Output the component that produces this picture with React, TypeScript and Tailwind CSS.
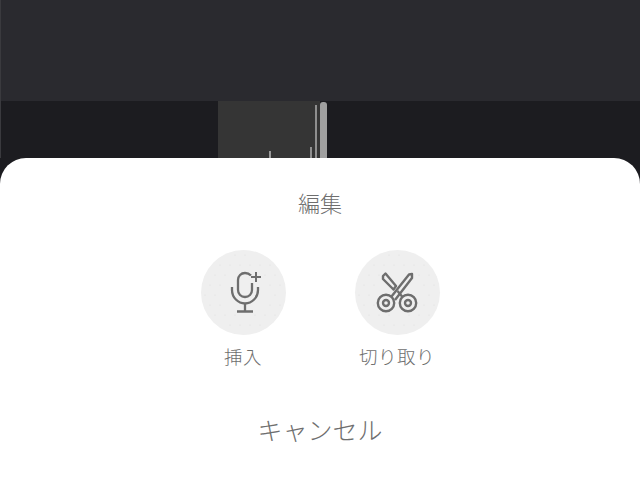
import React from "react";

const font = { fontFamily: '"Noto Sans CJK JP", "Noto Sans", sans-serif' };

function Dots() {
  const dots: React.ReactElement[] = [];
  for (let y = 5; y < 85; y += 10) {
    for (let x = 4 + ((y - 5) % 20 ? 5 : 0); x < 85; x += 10) {
      const dx = x - 42.5;
      const dy = y - 42.5;
      const r = Math.sqrt(dx * dx + dy * dy);
      if (r < 39 && r > 24) dots.push(<circle key={`${x}-${y}`} cx={x} cy={y} r={0.5} fill="#dcdcdc" stroke="none" />);
    }
  }
  return <>{dots}</>;
}

function Mic() {
  return (
    <svg width="85" height="85" viewBox="0 0 85 85" fill="none" stroke="#6e6e6e" strokeWidth="2.3">
      <Dots />
      <path d="M50 25.5 C48.5 24 46.5 23 44 23 C40 23 37 26 37 30 V40 C37 44 40 47 44 47 C48 47 51 44 51 40 V33" />
      <path d="M31 37 V40 C31 47.5 37 53.5 44 53.5 C51 53.5 57 47.5 57 40 V37" />
      <path d="M44 53.5 V61" />
      <path d="M36 61.5 H52" strokeWidth="2.4" />
      <path d="M55 22 V32 M50 27 H60" strokeWidth="2" />
    </svg>
  );
}

function Scissors() {
  return (
    <svg width="85" height="85" viewBox="0 0 85 85" fill="none" stroke="#6e6e6e" strokeWidth="2.4" strokeLinejoin="round">
      <Dots />
      <circle cx="31" cy="53" r="8.2" />
      <circle cx="31" cy="53" r="3" />
      <circle cx="53" cy="53" r="8.2" />
      <circle cx="53" cy="53" r="3" />
      <path d="M36.5 46.5 L54 24.5 L57 24 V28 L40 50" />
      <path d="M28 26 L30.5 23.5 L41 36 L38.5 39.5 L28 29 Z" />
      <path d="M42.5 41 L47.5 47" />
    </svg>
  );
}

function Action({ label, children }: { label: string; children: React.ReactNode }) {
  return (
    <div className="flex w-[85px] flex-col items-center">
      <div className="h-[85px] w-[85px] overflow-hidden rounded-full bg-[#efefef]">{children}</div>
      <span className="mt-[6px] whitespace-nowrap text-[18.5px] font-light leading-[30px] tracking-[0.5px] text-[#6e6e6e]">
        {label}
      </span>
    </div>
  );
}

export default function App() {
  return (
    <div className="relative h-[479px] w-[640px] overflow-hidden bg-[#1c1c20]" style={font}>
      <div className="h-[101px] border-l border-[#3a3a3e] bg-[#2a2a2f]" />
      <div className="flex h-[57px] border-l border-[#3a3a3e] bg-[#1c1c20]">
        <div className="w-[217px]" />
        <div className="relative h-full w-[102px] bg-[#353535]">
          <div className="absolute bottom-0 left-[51px] h-[7px] w-[2px] bg-[#9a9a9a]" />
          <div className="absolute bottom-0 left-[92px] h-[11px] w-[2px] bg-[#8f8f8f]" />
          <div className="absolute bottom-0 left-[97px] h-[53px] w-[2px] bg-[#8f8f8f]" />
        </div>
        <div className="mt-px h-[56px] w-[7px] rounded-t-[3px] bg-[#a0a0a0]" />
      </div>
      <div className="flex h-[321px] flex-col items-center rounded-t-[26px] bg-white">
        <div className="mt-[27px] text-[22px] font-light leading-[34px] text-[#6e6e6e]">編集</div>
        <div className="mt-[31px] flex gap-[69px]">
          <Action label="挿入">
            <Mic />
          </Action>
          <Action label="切り取り">
            <Scissors />
          </Action>
        </div>
        <div className="mt-[39px] text-[25px] font-light leading-[38px] text-[#6e6e6e]">キャンセル</div>
      </div>
    </div>
  );
}
